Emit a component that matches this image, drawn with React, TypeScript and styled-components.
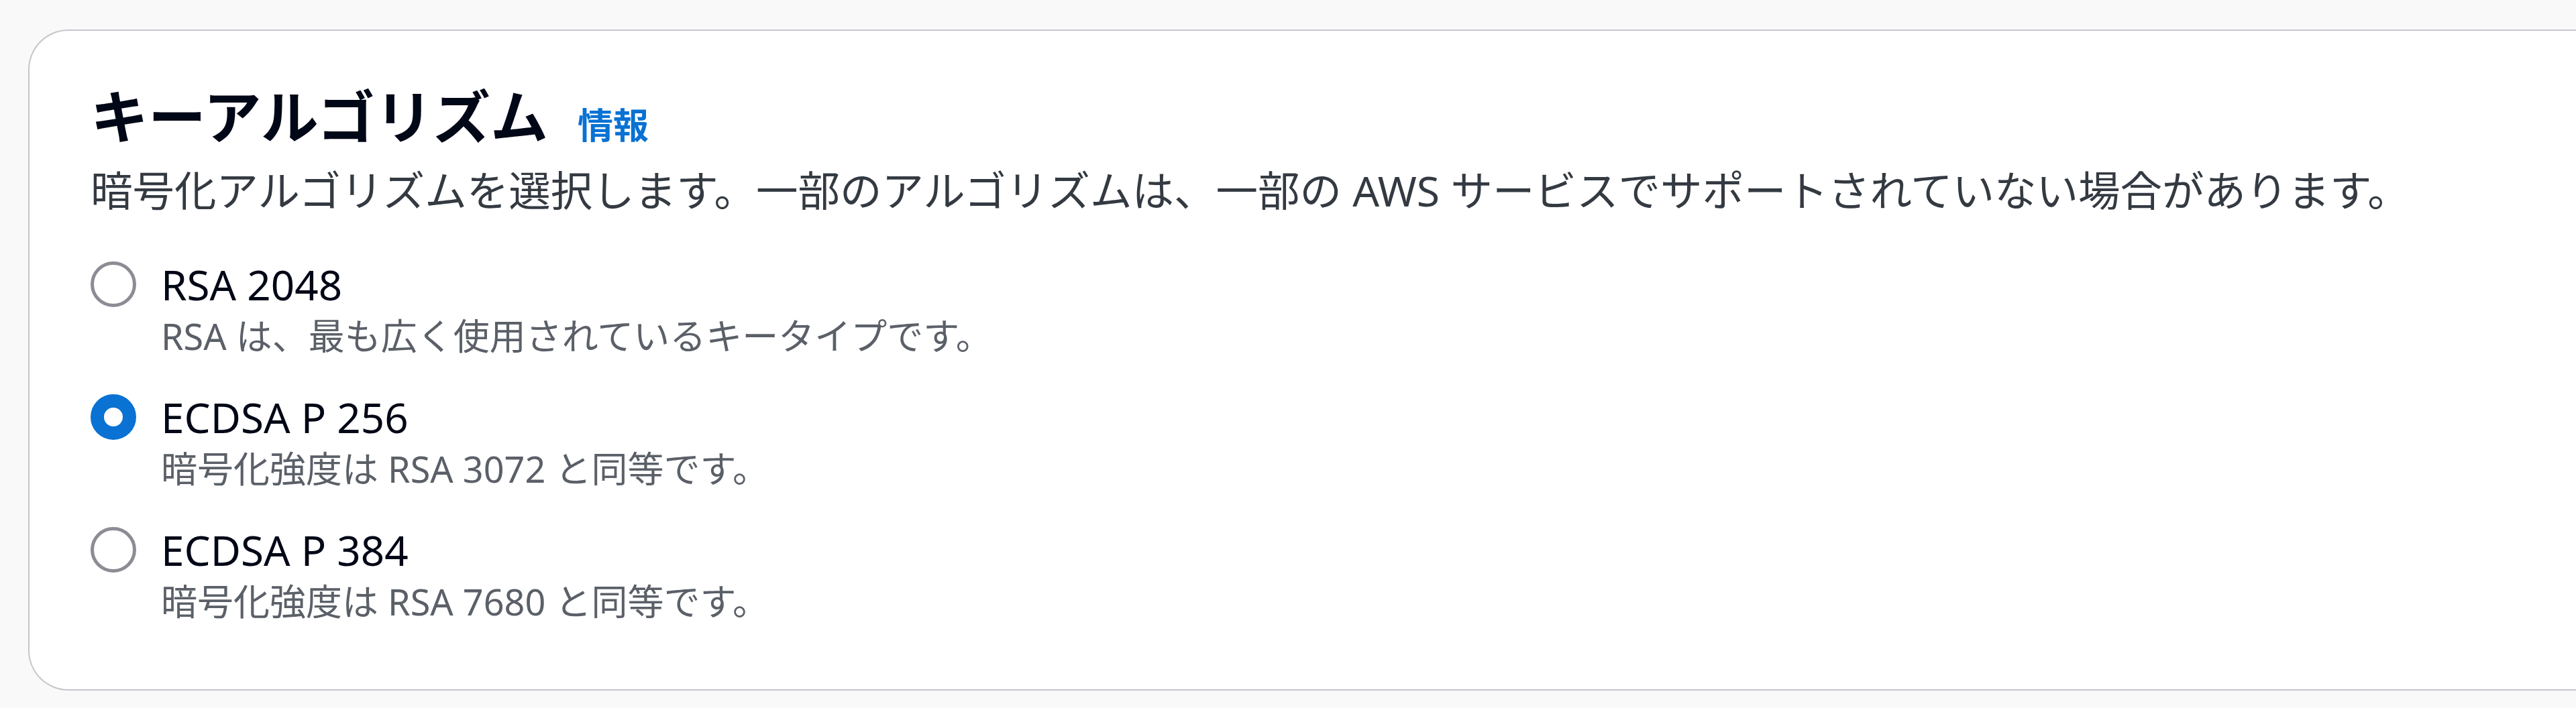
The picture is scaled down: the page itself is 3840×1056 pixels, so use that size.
import React from 'react'
import styled, { createGlobalStyle } from 'styled-components'

const GlobalStyle = createGlobalStyle`
  html, body {
    margin: 0;
    padding: 0;
    background: #f9f9f9;
  }

  body {
    font-family: 'Noto Sans', 'Noto Sans CJK JP', sans-serif;
    overflow: hidden;
  }
`

const Page = styled.div`
  display: flex;
  min-height: 100vh;
  box-sizing: border-box;
  padding: 44px 0 0 42px;
`

const Container = styled.section`
  flex: 1;
  align-self: flex-start;
  display: flex;
  flex-direction: column;
  background: #ffffff;
  border: 2px solid #c6c6cd;
  border-right: none;
  border-radius: 60px 0 0 60px;
  padding: 78px 0 96px 91px;
`

const Header = styled.div`
  display: flex;
  align-items: baseline;
  gap: 44px;
`

const Title = styled.h2`
  margin: 0;
  font-size: 86px;
  line-height: 100px;
  font-weight: 700;
  color: #000716;
`

const InfoLink = styled.a`
  font-size: 53px;
  font-weight: 700;
  color: #0972d3;
  text-decoration: none;
  cursor: pointer;
`

const Description = styled.p`
  margin: 22px 0 0;
  font-size: 62.5px;
  line-height: 76px;
  color: #343a42;
`

const RadioGroup = styled.div`
  display: flex;
  flex-direction: column;
  gap: 48px;
  margin-top: 64px;
`

const RadioRow = styled.label`
  display: grid;
  grid-template-columns: 68px 1fr;
  column-gap: 37px;
  cursor: pointer;
`

const RadioCircle = styled.span<{ $checked?: boolean }>`
  box-sizing: border-box;
  width: 68px;
  height: 68px;
  margin-top: 4px;
  border-radius: 50%;
  background: #ffffff;
  border: ${(p) => (p.$checked ? '20px solid #0972d3' : '5px solid #8c8c94')};
`

const RadioText = styled.span`
  display: flex;
  flex-direction: column;
  gap: 4px;
`

const RadioLabel = styled.span`
  font-size: 62px;
  line-height: 76px;
  color: #000716;
`

const RadioHint = styled.span`
  font-size: 54px;
  line-height: 70px;
  color: #5b6068;
`

const options = [
  { label: 'RSA 2048', hint: 'RSA は、最も広く使用されているキータイプです。', checked: false },
  { label: 'ECDSA P 256', hint: '暗号化強度は RSA 3072 と同等です。', checked: true },
  { label: 'ECDSA P 384', hint: '暗号化強度は RSA 7680 と同等です。', checked: false },
]

export default function App() {
  return (
    <>
      <GlobalStyle />
      <Page>
        <Container>
          <Header>
            <Title>キーアルゴリズム</Title>
            <InfoLink>情報</InfoLink>
          </Header>
          <Description>
            暗号化アルゴリズムを選択します。一部のアルゴリズムは、一部の AWS サービスでサポートされていない場合があります。
          </Description>
          <RadioGroup>
            {options.map((o) => (
              <RadioRow key={o.label}>
                <RadioCircle $checked={o.checked} />
                <RadioText>
                  <RadioLabel>{o.label}</RadioLabel>
                  <RadioHint>{o.hint}</RadioHint>
                </RadioText>
              </RadioRow>
            ))}
          </RadioGroup>
        </Container>
      </Page>
    </>
  )
}
